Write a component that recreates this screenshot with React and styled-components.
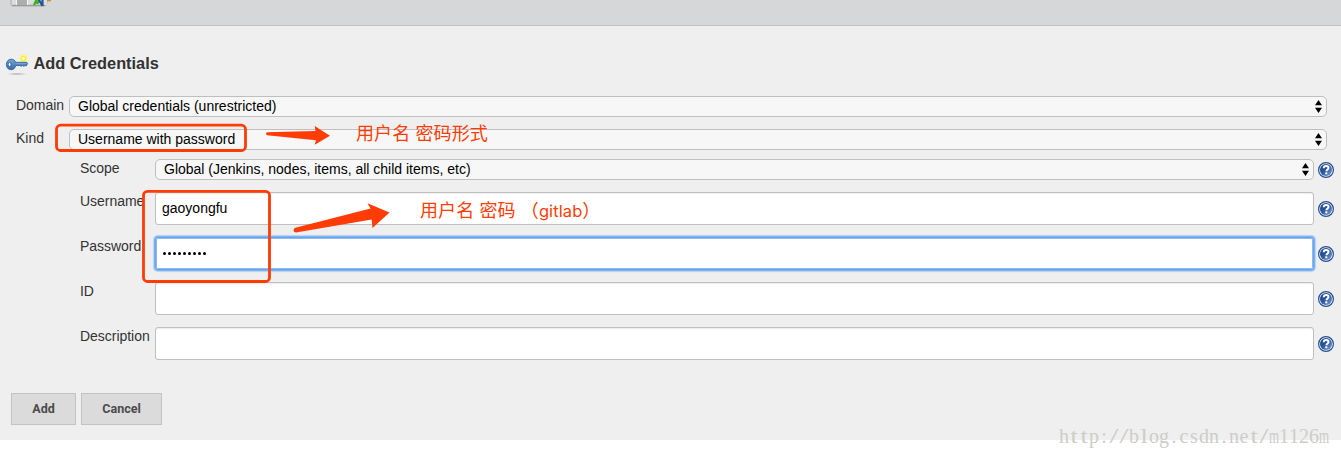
import React from 'react';
import styled, { createGlobalStyle } from 'styled-components';

const GlobalStyle = createGlobalStyle`
  * { box-sizing: border-box; }
  body { margin: 0; background: #fff; font-family: "Liberation Sans", Arial, sans-serif; font-size: 14px; color: #333; }
  svg { display: block; }
`;

const Page = styled.div`
  position: relative;
  width: 1341px;
  height: 457px;
  overflow: hidden;
`;

const Panel = styled.main`
  height: 440px;
  background: #efefef;
`;

const TopBar = styled.header`
  height: 26px;
  padding-left: 9px;
  background: #d5d7d9;
  border-bottom: 1px solid #bfc1c3;
`;

const Heading = styled.h1`
  display: flex;
  align-items: center;
  gap: 4.5px;
  height: 26px;
  margin: 25px 0 0 5px;
  font-size: 16.35px;
  line-height: 24px;
`;

const HeadingText = styled.span`
  padding-bottom: 2px;
`;

const Form = styled.form`
  display: flex;
  flex-direction: column;
  padding-top: 19px;
`;

const Row = styled.div`
  display: flex;
  align-items: flex-start;
  height: ${(p) => p.$height}px;
  padding-left: ${(p) => (p.$nested ? 80 : 16)}px;
`;

const Label = styled.label`
  flex: none;
  width: ${(p) => (p.$nested ? 75 : 53)}px;
  line-height: 18px;
  letter-spacing: -0.03px;
  white-space: nowrap;
`;

const Select = styled.div`
  display: flex;
  align-items: center;
  justify-content: space-between;
  width: ${(p) => (p.$nested ? 1159 : 1258)}px;
  height: 21px;
  padding: 0 3px 0 8px;
  border: 1px solid #bfbfbf;
  border-radius: 5px;
  background: #f7f7f7;
  color: #000;
  line-height: 19px;
`;

const Input = styled.input`
  width: 1159px;
  height: 33px;
  padding: 0 6px 1px;
  border: 1px solid ${(p) => (p.$focused ? '#69a5ec' : '#bfbfbf')};
  border-radius: 3px;
  outline: none;
  background: #fff;
  box-shadow: ${(p) => (p.$focused ? '0 0 0 1px #7fb2f0, 0 0 1px 2px #b4d2f5, inset 0 0 0 1px #8dbbf0' : 'inset 0 1px 1px #eeeeee')};
  color: #000;
  font: 14px "Liberation Sans", Arial, sans-serif;
`;

const HelpSlot = styled.span`
  align-self: flex-start;
  margin: ${(p) => p.$top}px 0 0 4px;
`;

const Buttons = styled.div`
  display: flex;
  gap: 5px;
  padding: 21px 0 0 11px;
`;

const Button = styled.button`
  width: ${(p) => p.$width}px;
  height: 32px;
  padding: 0 0 2px;
  border: 1px solid #c3c3c3;
  background: #dbdbdb;
  color: #4b4b4b;
  font: bold 12.5px Roboto, sans-serif;
`;

const Marks = styled.svg`
  position: absolute;
  left: 0;
  top: 0;
`;

const Note = styled.div`
  position: absolute;
  left: ${(p) => p.$x}px;
  top: ${(p) => p.$y}px;
  color: #ff3c05;
  font: 18px/26px "Noto Sans CJK SC", sans-serif;
  letter-spacing: 0.1px;
  word-spacing: 1px;
  white-space: pre;
`;

const Latin = styled.span`
  font-family: Inter, sans-serif;
  font-size: 16.5px;
`;

const Watermark = styled.div`
  position: absolute;
  left: 1059px;
  top: 425px;
  display: flex;
  color: #cdcdc8;
  font: 20px/22px "Liberation Serif", serif;
`;

const WatermarkChar = styled.span`
  display: flex;
  justify-content: center;
  width: 10px;
  transform: scaleX(${(p) => p.$stretch});
`;

const stretches = { m: 0.65, '/': 1.6, t: 1.3, l: 1.3 };

const Stepper = () => (
  <svg width="9" height="13" viewBox="0 0 9 13">
    <path d="M4.5 0 8 5.3H1zM4.5 13 8 7.7H1z" fill="#000" />
  </svg>
);

const Help = () => (
  <svg width="16" height="16" viewBox="0 0 16 16">
    <defs>
      <linearGradient id="help" x1="0" y1="0" x2="1" y2="1">
        <stop offset="0" stopColor="#1c417f" />
        <stop offset="0.45" stopColor="#2b559a" />
        <stop offset="1" stopColor="#7da3d3" />
      </linearGradient>
    </defs>
    <circle cx="8" cy="8" r="7.4" fill="#e9f0f8" stroke="#28508e" strokeWidth="1.2" />
    <circle cx="8" cy="8" r="6" fill="url(#help)" />
    <path d="M5.7 6.2C5.8 4.6 6.7 4 8.1 4c1.5 0 2.4.7 2.4 1.9 0 1.5-2.1 1.6-2.1 3.4" fill="none" stroke="#fff" strokeWidth="1.9" />
    <rect x="7.3" y="10.3" width="2" height="2" fill="#fff" />
  </svg>
);

const KeyIcon = () => (
  <svg width="24" height="26" viewBox="0 0 24 26">
    <defs>
      <radialGradient id="keyShade">
        <stop offset="0" stopColor="#a7a7a7" />
        <stop offset="1" stopColor="#efefef" />
      </radialGradient>
      <linearGradient id="keyBlue" x1="0" y1="0" x2="0" y2="1">
        <stop offset="0" stopColor="#78a5d6" />
        <stop offset="1" stopColor="#3469aa" />
      </linearGradient>
    </defs>
    <ellipse cx="12" cy="23" rx="11" ry="1.2" fill="url(#keyShade)" />
    <circle cx="18.5" cy="7.5" r="4" fill="#fff65a" opacity="0.8" />
    <circle cx="18.5" cy="7.5" r="2.1" fill="#fffde2" stroke="#f8e82c" />
    <path d="M6.2 8.2c2.4 0 3.8 1.3 4.5 3.1h11.1l.8 1.2-1.4 2.5-1.3-.5-1 .8-1.4-.8-1.3.8-1.2-.8h-4.3c-.7 3-2.3 4.2-4.5 4.2-3 0-4.8-2.1-4.8-5.1s1.8-5.4 4.8-5.4Z" fill="url(#keyBlue)" stroke="#31649f" strokeWidth=".9" />
    <path d="M11 12.6h10.5" stroke="#79a4d2" />
    <ellipse cx="4.6" cy="13.5" rx="1.4" ry="2.1" fill="#edf3f8" stroke="#31588d" strokeWidth=".7" />
  </svg>
);

const JobIcon = () => (
  <svg width="44" height="8" viewBox="0 0 44 8">
    <path d="M1 0h39l-2 5q-1 2-4 2H5q-3 0-4-3z" fill="#c0c1c1" />
    <path d="M3 0h35v5H3z" fill="#dcdddc" />
    <path d="M3 5.3h33" stroke="#929493" />
    <path d="M8 0h10v5H8z" fill="#acadac" />
    <path d="M7.5 0v5M18.5 0v5" stroke="#f4f4f4" />
    <path d="M27.5 0l-2.5 5M30 0l-2 4" stroke="#3fae20" strokeWidth="2.4" />
    <path d="M30 0l3.5 6M33.5 0v6" stroke="#24569d" strokeWidth="2.2" />
    <path d="M38 .5h4" stroke="#cc9420" strokeWidth="1.5" />
  </svg>
);

const fields = [
  { label: 'Username', type: 'text', value: 'gaoyongfu' },
  { label: 'Password', type: 'password', value: '•••••••••', focused: true },
  { label: 'ID', type: 'text', value: '' },
  { label: 'Description', type: 'text', value: '' },
];

const PasswordBox = styled(Input).attrs({ as: 'div' })`
  display: flex;
  align-items: center;
  gap: 2px;
  padding: 0 7px 1px;
`;

const Dot = styled.i`
  width: 3px;
  height: 3px;
  border-radius: 50%;
  background: #000;
`;

export default function App() {
  return (
    <Page>
      <GlobalStyle />
      <Panel>
        <TopBar><JobIcon /></TopBar>
        <Heading><KeyIcon /><HeadingText>Add Credentials</HeadingText></Heading>
        <Form>
          <Row $height={33}>
            <Label>Domain</Label>
            <Select>Global credentials (unrestricted)<Stepper /></Select>
          </Row>
          <Row $height={30}>
            <Label>Kind</Label>
            <Select>Username with password<Stepper /></Select>
          </Row>
          <Row $nested $height={33}>
            <Label $nested>Scope</Label>
            <Select $nested>Global (Jenkins, nodes, items, all child items, etc)<Stepper /></Select>
            <HelpSlot $top={3}><Help /></HelpSlot>
          </Row>
          {fields.map((field) => (
            <Row key={field.label} $nested $height={45}>
              <Label $nested>{field.label}</Label>
              {field.focused ? (
                <PasswordBox $focused>
                  {[...field.value].map((_, i) => <Dot key={i} />)}
                </PasswordBox>
              ) : (
                <Input type={field.type} defaultValue={field.value} />
              )}
              <HelpSlot $top={9}><Help /></HelpSlot>
            </Row>
          ))}
          <Buttons>
            <Button type="button" $width={65}>Add</Button>
            <Button type="button" $width={81}>Cancel</Button>
          </Buttons>
        </Form>
      </Panel>
      <Marks width="1341" height="457" viewBox="0 0 1341 457">
        <g fill="none" stroke="#ff3c05" strokeWidth="2.8">
          <rect x="56.5" y="125.2" width="189" height="25.3" rx="4" />
          <rect x="143.5" y="191.3" width="126" height="90.2" rx="4" />
        </g>
        <g fill="#ff3c05">
          <path d="M267 132.3 315.5 131 314.7 126 330 135.7 314.7 144.7 316 140.2 267 135.3q-2-1.5 0-3Z" />
          <path d="M294.5 228 370.5 208.5 367.5 203.3 389.5 212.5 372.5 228 371.7 219.5 296 232.5q-3.8-.5-1.5-4.5Z" />
        </g>
      </Marks>
      <Note $x={356} $y={119}>用户名 密码形式</Note>
      <Note $x={420} $y={196}>用户名 密码 （<Latin>gitlab</Latin>）</Note>
      <Watermark>
        {[...'http://blog.csdn.net/m1126m'].map((char, i) => (
          <WatermarkChar key={i} $stretch={stretches[char] || 1}>{char}</WatermarkChar>
        ))}
      </Watermark>
    </Page>
  );
}
